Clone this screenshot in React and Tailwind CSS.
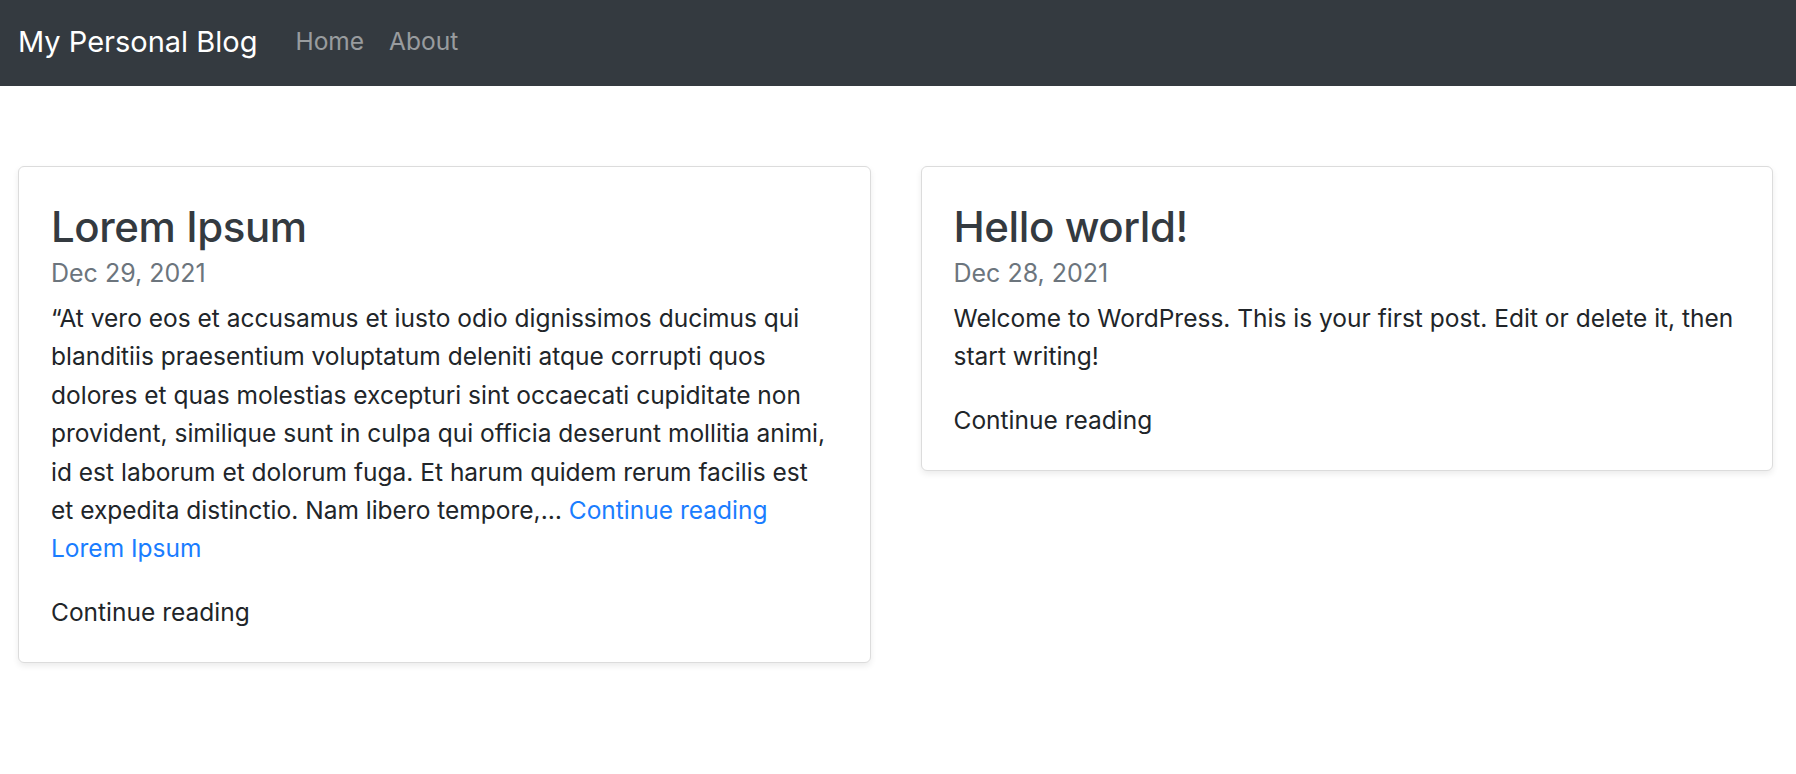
import React from "react";

const font = { fontFamily: "Inter, 'Noto Sans', sans-serif" };

function Card({ title, date, children }) {
  return (
    <div className="self-start rounded-[6px] border border-[#dcdcdc] bg-white px-[32px] pt-[33px] pb-[31px] shadow-[0_3px_6px_rgba(0,0,0,0.08)]">
      <h3 className="text-[42px] font-medium leading-[54px] tracking-[-0.01em] text-[#343a40]">{title}</h3>
      <div className="mt-px mb-[8px] text-[25px] leading-[36px] text-[#6c757d]">{date}</div>
      <div className="whitespace-nowrap text-[24.5px] leading-[38.4px] text-[#212529]">{children}</div>
      <div className="text-[24.5px] leading-[38.4px] text-[#212529]">Continue reading</div>
    </div>
  );
}

export default function App() {
  return (
    <div className="min-h-[774px] bg-white" style={font}>
      <nav className="flex h-[86px] items-center bg-[#343a40] px-[18px] pb-[4px]">
        <span className="mr-[38px] text-[29px] leading-none text-white">My Personal Blog</span>
        <a className="mr-[25px] text-[24.5px] leading-none text-white/50">Home</a>
        <a className="text-[24.5px] leading-none text-white/50">About</a>
      </nav>
      <main className="mt-[80px] grid grid-cols-2 items-start gap-[50px] pl-[18px] pr-[23px]">
        <Card title="Lorem Ipsum" date="Dec 29, 2021">
          <p className="mb-[25px]">
            “At vero eos et accusamus et iusto odio dignissimos ducimus qui<br />
            blanditiis praesentium voluptatum deleniti atque corrupti quos<br />
            dolores et quas molestias excepturi sint occaecati cupiditate non<br />
            provident, similique sunt in culpa qui officia deserunt mollitia animi,<br />
            id est laborum et dolorum fuga. Et harum quidem rerum facilis est<br />
            et expedita distinctio. Nam libero tempore,…{" "}
            <a className="text-[#1a7dff]">Continue reading<br />Lorem Ipsum</a>
          </p>
        </Card>
        <Card title="Hello world!" date="Dec 28, 2021">
          <p className="mb-[25px]">
            Welcome to WordPress. This is your first post. Edit or delete it, then<br />
            start writing!
          </p>
        </Card>
      </main>
    </div>
  );
}
